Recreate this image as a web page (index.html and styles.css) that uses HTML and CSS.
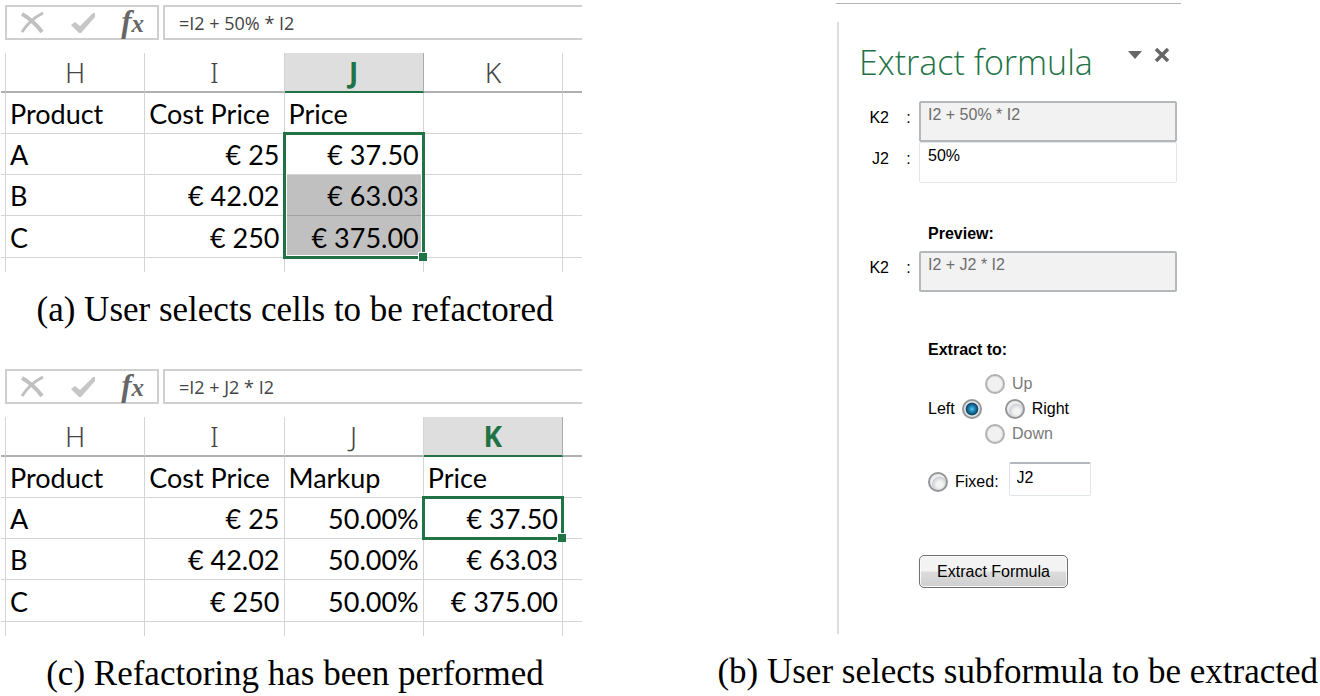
FILE: index.html
```html
<!DOCTYPE html>
<html lang="en">
<head>
<meta charset="utf-8">
<title>Extract formula refactoring</title>
<link rel="stylesheet" href="styles.css">
</head>
<body>
<main class="figures">
  <div class="sheets">
    <figure class="figure">
      <div class="formula-bar">
        <div class="formula-tools">
          <button class="tool" type="button" aria-label="Cancel"><svg width="26" height="24" viewBox="0 0 26 24"><path d="M3 3C9 6 18 14 23 21" stroke="#c0c0c0" stroke-width="4" fill="none"/><path d="M24 2C16 6 8 13 3 21" stroke="#c0c0c0" stroke-width="3" fill="none"/></svg></button>
          <button class="tool" type="button" aria-label="Enter"><svg width="26" height="24" viewBox="0 0 26 24"><path d="M1 14L5 11L10 15L23 2H25V6L11 22H9Z" fill="#c6c6c6"/></svg></button>
          <button class="tool fx" type="button" aria-label="Insert function">f<span class="fx-x">x</span></button>
        </div>
        <input class="formula-input" type="text" aria-label="Formula" value="=I2 + 50% * I2">
      </div>
      <table class="sheet">
        <colgroup><col class="col-edge"><col class="col"><col class="col"><col class="col"><col class="col"><col class="col-rest"></colgroup>
        <thead><tr><th></th><th>H</th><th>I</th><th class="active">J</th><th>K</th><th></th></tr></thead>
        <tbody>
          <tr><td></td><td>Product</td><td>Cost Price</td><td>Price</td><td></td><td></td></tr>
          <tr><td></td><td>A</td><td class="num">€ 25</td><td class="num anchor">€ 37.50<span class="selection three"></span></td><td></td><td></td></tr>
          <tr><td></td><td>B</td><td class="num">€ 42.02</td><td class="num picked">€ 63.03</td><td></td><td></td></tr>
          <tr><td></td><td>C</td><td class="num">€ 250</td><td class="num picked">€ 375.00</td><td></td><td></td></tr>
          <tr class="stub"><td></td><td></td><td></td><td></td><td></td><td></td></tr>
        </tbody>
      </table>
      <figcaption class="caption">(a) User selects cells to be refactored</figcaption>
    </figure>
    <figure class="figure">
      <div class="formula-bar">
        <div class="formula-tools">
          <button class="tool" type="button" aria-label="Cancel"><svg width="26" height="24" viewBox="0 0 26 24"><path d="M3 3C9 6 18 14 23 21" stroke="#c0c0c0" stroke-width="4" fill="none"/><path d="M24 2C16 6 8 13 3 21" stroke="#c0c0c0" stroke-width="3" fill="none"/></svg></button>
          <button class="tool" type="button" aria-label="Enter"><svg width="26" height="24" viewBox="0 0 26 24"><path d="M1 14L5 11L10 15L23 2H25V6L11 22H9Z" fill="#c6c6c6"/></svg></button>
          <button class="tool fx" type="button" aria-label="Insert function">f<span class="fx-x">x</span></button>
        </div>
        <input class="formula-input" type="text" aria-label="Formula" value="=I2 + J2 * I2">
      </div>
      <table class="sheet">
        <colgroup><col class="col-edge"><col class="col"><col class="col"><col class="col"><col class="col"><col class="col-rest"></colgroup>
        <thead><tr><th></th><th>H</th><th>I</th><th>J</th><th class="active">K</th><th></th></tr></thead>
        <tbody>
          <tr><td></td><td>Product</td><td>Cost Price</td><td>Markup</td><td>Price</td><td></td></tr>
          <tr><td></td><td>A</td><td class="num">€ 25</td><td class="num">50.00%</td><td class="num anchor">€ 37.50<span class="selection"></span></td><td></td></tr>
          <tr><td></td><td>B</td><td class="num">€ 42.02</td><td class="num">50.00%</td><td class="num">€ 63.03</td><td></td></tr>
          <tr><td></td><td>C</td><td class="num">€ 250</td><td class="num">50.00%</td><td class="num">€ 375.00</td><td></td></tr>
          <tr class="stub"><td></td><td></td><td></td><td></td><td></td><td></td></tr>
        </tbody>
      </table>
      <figcaption class="caption">(c) Refactoring has been performed</figcaption>
    </figure>
  </div>

  <figure class="figure pane-figure">
    <div class="pane-frame">
      <form class="pane">
        <header class="pane-head">
          <h1 class="pane-title">Extract formula</h1>
          <button class="pane-button" type="button" aria-label="Pane options"><svg width="14" height="18" viewBox="0 0 14 18"><path d="M0 5H14L7 13Z" fill="#666"/></svg></button>
          <button class="pane-button" type="button" aria-label="Close"><svg width="16" height="18" viewBox="0 0 16 18"><path d="M2 3L14 15M14 3L2 15" stroke="#666" stroke-width="3.5"/></svg></button>
        </header>
        <div class="field"><label class="cell-name" for="source">K2</label><span class="colon">:</span><textarea class="box" id="source" disabled>I2 + 50% * I2</textarea></div>
        <div class="field"><label class="cell-name" for="part">J2</label><span class="colon">:</span><textarea class="box" id="part">50%</textarea></div>
        <h2 class="group-title preview-title">Preview:</h2>
        <div class="field"><label class="cell-name" for="preview">K2</label><span class="colon">:</span><textarea class="box" id="preview" disabled>I2 + J2 * I2</textarea></div>
        <h2 class="group-title extract-title">Extract to:</h2>
        <div class="targets">
          <label class="choice vertical off"><input class="radio" type="radio" name="target" disabled>Up</label>
          <div class="sideways">
            <label class="choice">Left<input class="radio" type="radio" name="target" checked></label>
            <label class="choice"><input class="radio" type="radio" name="target">Right</label>
          </div>
          <label class="choice vertical off"><input class="radio" type="radio" name="target" disabled>Down</label>
          <div class="fixed">
            <label class="choice fixed-choice"><input class="radio" type="radio" name="target">Fixed:</label>
            <input class="fixed-input" type="text" aria-label="Fixed cell" value="J2">
          </div>
        </div>
        <button class="submit" type="button">Extract Formula</button>
      </form>
    </div>
    <figcaption class="caption">(b) User selects subformula to be extracted</figcaption>
  </figure>
</main>
</body>
</html>
```
FILE: styles.css
```css
* { box-sizing: border-box; }
body { margin: 0; background: #fff; color: #000; }
button, input, textarea { font: inherit; color: inherit; margin: 0; }

.figures { display: grid; grid-template-columns: 582fr 738fr; min-height: 100vh; }
.sheets { display: flex; flex-direction: column; gap: 41px; padding-top: 5px; }
.figure { margin: 0; }
.caption {
  margin-top: 20px;
  padding-left: 8px;
  font: 35px/36px "Liberation Serif", serif;
  text-align: center;
  white-space: nowrap;
}

/* Formula bar */
.formula-bar { display: flex; gap: 4px; height: 35px; margin: 0 0 13px 5px; }
.formula-tools {
  display: flex;
  align-items: center;
  justify-content: space-between;
  width: 154px;
  padding: 0 13px 0 12px;
  border: 2px solid #cfcfcf;
}
.tool { display: flex; padding: 0; border: 0; background: none; }
.fx { align-items: baseline; color: #666; font: italic bold 31px/30px "Liberation Serif", serif; }
.fx-x { font-size: 25px; }
.formula-input {
  flex: 1;
  min-width: 0;
  padding: 0 14px;
  border: 2px solid #cfcfcf;
  border-right: 0;
  color: #444;
  font: 18px "Open Sans", sans-serif;
}

/* Worksheet grid */
.sheet {
  width: 100%;
  padding-left: 1px;
  table-layout: fixed;
  border-collapse: separate;
  border-spacing: 0;
  font: 27px/38px Lato, sans-serif;
}
.col-edge { width: 5px; }
.col { width: 24%; }
.col-rest { width: 19px; }
.sheet th {
  height: 40px;
  padding: 0;
  border-right: 1px solid #d4d4d4;
  border-bottom: 2px solid #b0b0b0;
  color: #444;
  font: 300 28px/38px "Noto Sans", sans-serif;
}
.sheet .active {
  border-right-color: #ababab;
  border-bottom-color: #217346;
  background: #dedede;
  color: #217346;
  font-weight: 700;
}
.sheet td {
  height: 41px;
  padding: 2px 4px 0;
  border-right: 1px solid #d4d4d4;
  border-bottom: 1px solid #d4d4d4;
  white-space: nowrap;
}
.sheet tr:nth-child(4) td { height: 42px; }
.sheet td:first-child, .sheet th:first-child { padding: 0; }
.sheet td:last-child, .sheet th:last-child { border-right: 0; }
.sheet .num { text-align: right; }
.sheet .picked { border-bottom-color: #a0a0a0; background: #c0c0c0; }
.sheet .stub td { height: 14px; padding: 0; border-bottom: 0; }
.anchor { position: relative; }
.selection {
  position: absolute;
  inset: -2px;
  border: 3px solid #217346;
  box-shadow: inset 0 0 0 1px #fff;
}
.three { bottom: calc(-200% - 5px); }
.selection::after {
  content: "";
  position: absolute;
  right: -5px;
  bottom: -5px;
  width: 8px;
  height: 8px;
  border: 1px solid #fff;
  border-width: 1px 0 0 1px;
  background: #217346;
}

/* Task pane */
.pane-figure { padding-top: 3px; }
.pane-frame { margin: 0 139px 0 254px; padding-top: 18px; border-top: 1px solid #b4b4b4; }
.pane {
  min-height: 612px;
  margin-left: 1px;
  padding: 16px 4px 0 20px;
  border-left: 2px solid #dedede;
  font: 16px/20px "Liberation Sans", sans-serif;
}
.pane-head { display: flex; gap: 12px; align-items: flex-start; padding-right: 7px; margin-bottom: 15px; }
.pane-title { flex: 1; margin: 0; color: #217346; font: 300 34px/48px "Open Sans", sans-serif; white-space: nowrap; }
.pane-button { display: flex; margin-top: 8px; padding: 0; border: 0; background: none; }
.field { display: grid; grid-template-columns: 30px 30px 1fr; line-height: 34px; }
.cell-name { text-align: right; }
.colon { padding-left: 9px; text-align: center; }
.box {
  display: block;
  width: 100%;
  height: 41px;
  padding: 3px 8px;
  border: 1px solid #e2e6ea;
  border-radius: 2px;
  background: #fff;
  line-height: 20px;
  resize: none;
  overflow: hidden;
}
.box:disabled { padding: 2px 7px; border: 2px solid #b4b8bb; background: #f2f2f2; color: #6d6d6d; }
.group-title { margin: 0 0 0 69px; font-size: 16px; line-height: 20px; }
.preview-title { margin-top: 41px; margin-bottom: 7px; }
.extract-title { margin-top: 48px; margin-bottom: 11px; }
.targets { padding-left: 69px; }
.choice { display: flex; align-items: center; gap: 7px; height: 25px; }
.vertical { padding-left: 57px; }
.off { color: #7a7a7a; }
.sideways { display: flex; gap: 23px; }
.radio {
  appearance: none;
  width: 20px;
  height: 20px;
  border: 2px solid #949698;
  border-radius: 50%;
  background: radial-gradient(circle at 60% 65%, #f4f4f4 0 20%, #ced2d8 50%, #eee 58%);
}
.radio:disabled { border-color: #b0b2b3; background: #f1f1f1; box-shadow: inset 0 0 0 1px #e2e2e2; }
.radio:checked { background: radial-gradient(circle at 50% 50%, #5cc8ec 0, #1c86b8 25%, #124566 52%, #e4e8ea 60%); }
.fixed { display: flex; align-items: flex-end; gap: 10px; margin-top: 16px; }
.fixed-choice { height: 29px; }
.fixed-input {
  width: 82px;
  height: 34px;
  padding: 0 7px 4px;
  border: 1px solid #dfe5eb;
  border-top: 2px solid #b4b8bd;
  border-radius: 2px;
}
.submit {
  display: block;
  height: 33px;
  margin: 59px 0 0 60px;
  padding: 0 16px;
  border: 1px solid #707070;
  border-radius: 5px;
  background: linear-gradient(#f3f3f3 0 48%, #dcdcdc 52%, #cecece);
  box-shadow: inset 0 0 0 1px #fafafa;
  min-width: 149px;
}
.pane-figure .caption { padding: 0 2px 0 0; text-align: right; }
```
